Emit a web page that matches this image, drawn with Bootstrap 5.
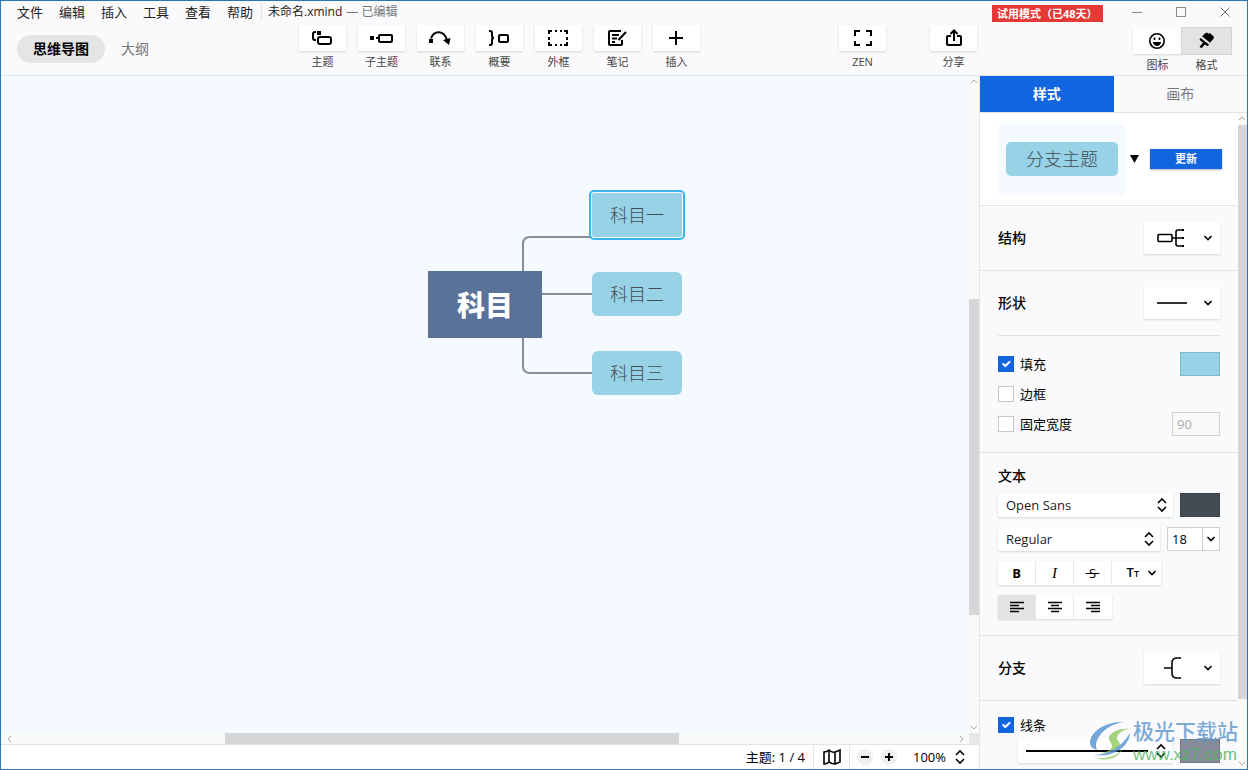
<!DOCTYPE html>
<html lang="zh-CN">
<head>
<meta charset="utf-8">
<meta name="viewport" content="width=device-width, initial-scale=1">
<title>未命名.xmind</title>
<link href="https://cdn.jsdelivr.net/npm/bootstrap@5.3.0/dist/css/bootstrap.min.css" rel="stylesheet">
<style>
:root { --accent: #1166e0; --line: #e2e4e8; --panel: #fafafc; --topic: #97d2e7; }
body { font-family: "Open Sans", "Noto Sans CJK SC", sans-serif; font-size: 13px; line-height: 20px; color: #000; background: var(--panel); }
svg { display: block; flex: none; }
a { color: inherit; text-decoration: none; }
button { padding: 0; border: 0; background: none; color: inherit; }
.window { border: 1px solid #2a76b8; }
.ico { fill: none; stroke: #000; stroke-width: 2; }
.ico.thin { stroke-width: 1.6; }

/* title row and toolbar */
.titlebar { height: 24px; padding: 0 16px 2px; color: #222; }
.menu-links { gap: 16px; }
.menu-links a { display: block; width: 26px; white-space: nowrap; }
.doc-name { margin-left: 8px; padding-left: 6px; border-left: 1px solid var(--line); font-size: 12px; line-height: 16px; }
.doc-state { margin-left: 4px; font-size: 12px; color: #777; }
.trial { width: 111px; height: 17px; padding-left: 5px; margin: 3px 28px 0 0; background: #e53935; color: #fff; font-size: 11px; line-height: 17px; font-weight: 700; white-space: nowrap; }
.win-buttons { gap: 32px; }
.toolbar { height: 51px; border-bottom: 1px solid var(--line); }
.view-switch { width: 298px; padding: 10px 0 0 16px; }
.view-pill { width: 88px; height: 28px; border-radius: 14px; background: #e5e5e6; font-size: 14px; font-weight: 700; }
.view-plain { height: 28px; margin-left: 16px; font-size: 14px; color: #777; }
.tools { gap: 12px; }
.tool { width: 47px; font-size: 11px; line-height: 16px; color: #444; white-space: nowrap; }
.tool-face { width: 47px; height: 26px; margin-bottom: 3px; background: #fff; box-shadow: 0 1px 2px rgba(0,0,0,.15); }
.zen-group { gap: 44px; margin-right: 2px; }
.side-tools { width: 268px; padding: 3px 16px 0 0; }
.side-tools .tool, .side-tools .tool-face { width: 49px; }
.side-tools .active .tool-face { background: #e3e3e4; box-shadow: 0 0 0 1px #d4d4d6; }

/* map area */
.board { background: #f4faff; }
.board svg.links { fill: none; stroke: #878d99; stroke-width: 2; }
.topic { position: absolute; left: 591px; width: 90px; height: 44px; border-radius: 6px; background: var(--topic); color: #434b54; font-size: 18px; font-weight: 300; }
.topic.one { top: 117px; border-radius: 2px; outline: 2px solid #39b5ee; outline-offset: 1px; box-shadow: 0 0 0 1px #f4faff; }
.topic.two { top: 196px; }
.topic.three { top: 275px; }
.topic.root { left: 427px; top: 195px; width: 114px; height: 67px; border-radius: 0; background: #5a7199; color: #fff; font-size: 28px; font-weight: 900; }
.vbar { width: 10px; background: #fafafb; }
.format .vbar { width: 9px; }
.hbar { height: 11px; background: #fafafb; }
.thumb { background: #d6d6d8; }
.bar-arrow { fill: none; stroke: #aaa; stroke-width: 1; }
.corner { width: 10px; background: #e8e8ea; }
.status { height: 25px; background: #fff; border-top: 1px solid var(--line); }
.status > * { height: 24px; }
.status .cell { border-left: 1px solid var(--line); }
.map-cell { width: 36px; }
.zoom-cell { width: 130px; padding-left: 7px; }
.zoom-value { width: 40px; text-align: left; }
.round { width: 16px; height: 16px; border-radius: 8px; background: #f0f0f1; }

/* format panel */
.format { width: 268px; border-left: 1px solid var(--line); background: var(--panel); }
.tab-row { height: 37px; border-bottom: 1px solid var(--line); }
.tab-row button { font-size: 14px; color: #777; }
.tab-row button.active { background: var(--accent); color: #fff; font-weight: 700; }
.block { padding: 0 18px; border-bottom: 1px solid var(--line); }
.block h2 { margin: 0; font-size: 14px; line-height: 20px; font-weight: 500; }
.opt-row { height: 64px; }
.block.opt-row { height: 65px; }
.preview { height: 93px; padding: 0 16px 0 18px; background: #fff; }
.preview-tile { width: 128px; height: 71px; border-radius: 4px; background: #f4faff; }
.preview-topic { width: 112px; height: 34px; border-radius: 5px; background: var(--topic); color: #434b54; font-size: 18px; font-weight: 300; }
.update { width: 72px; height: 20px; background: var(--accent); color: #fff; font-size: 11px; font-weight: 700; box-shadow: 0 1px 2px rgba(0,0,0,.3); }
.picker, .pick, .seg { background: #fff; box-shadow: 0 1px 2px rgba(0,0,0,.15); }
.picker { width: 76px; height: 32px; padding: 0 7px 0 13px; }
.checks { padding: 14px 0; border-top: 1px solid var(--line); gap: 2px; }
.checks > div { height: 28px; }
.tick.form-check-input { width: 16px; height: 16px; margin: 0 6px 0 0; border: 1px solid #c6c8cc; border-radius: 0; background-color: #fff; }
.tick.form-check-input:checked { background-color: var(--accent); border-color: var(--accent); }
.swatch { width: 40px; height: 24px; border: 1px solid rgba(0,0,0,.12); }
.swatch.sky { background: var(--topic); }
.swatch.ink { background: #434b54; }
.swatch.slate { background: #858b98; }
.num { height: 24px; padding: 0 0 0 4px; border: 1px solid #cfd1d5; border-radius: 0; background: #fff; font-size: 13px; }
.num.fixed { width: 48px; color: #aaa; background: var(--panel); }
.num.size { width: 36px; }
.size-drop { width: 17px; height: 24px; border: 1px solid #cfd1d5; border-left: 0; background: #fff; }
.text-block { padding-top: 13px; padding-bottom: 16px; }
.text-rows { gap: 10px; margin-top: 7px; }
.pick { position: relative; height: 24px; }
.pick select { width: 100%; height: 24px; padding: 0 8px; border: 0; appearance: none; background: transparent; font-size: 13px; color: #222; }
.pick svg { position: absolute; right: 6px; top: 4px; pointer-events: none; }
.pick.family { width: 175px; }
.pick.weight { width: 162px; }
.seg { height: 24px; }
.seg button { width: 38px; height: 24px; border-right: 1px solid #e8e8ea; }
.seg button:last-child { border-right: 0; }
.seg button.wide { width: 49px; gap: 8px; }
.seg button.active { background: #e3e3e4; }
.seg .slant { font-family: "Liberation Serif", serif; font-size: 15px; font-style: italic; }
.tiny { font-size: 9px; }
.line-block { padding-top: 14px; }
.stroke-pick { width: 154px; }
.stroke-sample { display: block; width: 122px; height: 2px; margin-left: 8px; background: #000; }

.stamp { position: absolute; right: 9px; bottom: 4px; opacity: .8; gap: 2px; }
.stamp-name { font-size: 21px; line-height: 28px; font-weight: 500; color: #5d96cd; }
.stamp-url { font-family: "Liberation Sans", sans-serif; font-size: 17px; line-height: 20px; color: #4fb560; }
</style>
</head>
<body>
<div class="window vh-100 d-flex flex-column overflow-hidden position-relative">

  <header>
    <div class="titlebar d-flex align-items-center">
      <nav class="menu-links d-flex" aria-label="菜单">
        <a href="#">文件</a><a href="#">编辑</a><a href="#">插入</a><a href="#">工具</a><a href="#">查看</a><a href="#">帮助</a>
      </nav>
      <span class="doc-name">未命名.xmind</span>
      <span class="doc-state">— 已编辑</span>
      <span class="trial ms-auto">试用模式（已48天）</span>
      <div class="win-buttons d-flex">
        <button aria-label="最小化"><svg width="12" height="12" class="bar-arrow"><path d="M1 6.500h10" stroke="#888"/></svg></button>
        <button aria-label="最大化"><svg width="12" height="12" class="bar-arrow"><path d="M1.500 1.500h9v9h-9z" stroke="#888"/></svg></button>
        <button aria-label="关闭"><svg width="12" height="12" class="bar-arrow"><path d="M1.500 1.500l9 9m0-9l-9 9" stroke="#777"/></svg></button>
      </div>
    </div>

    <div class="toolbar d-flex">
      <div class="view-switch d-flex align-items-start">
        <button class="view-pill">思维导图</button>
        <button class="view-plain">大纲</button>
      </div>
      <div class="tools d-flex align-items-start">
        <button class="tool"><span class="tool-face d-flex align-items-center justify-content-center"><svg class="ico" width="24" height="20"><path d="M5 4H4Q2 4 2 6v4q0 2 2 2h1"/><path d="M6 3h4v4H6z" fill="#000" stroke="none"/><rect x="7" y="9" width="13" height="7" rx="2"/></svg></span>主题</button>
        <button class="tool"><span class="tool-face d-flex align-items-center justify-content-center"><svg class="ico" width="24" height="20"><path d="M0 8h4v4H0z" fill="#000" stroke="none"/><path d="M6 10h3"/><rect x="9" y="7" width="13" height="7" rx="1"/></svg></span>子主题</button>
        <button class="tool"><span class="tool-face d-flex align-items-center justify-content-center"><svg class="ico" width="24" height="20"><path d="M0 11h4v4H0z" fill="#000" stroke="none"/><path d="M2 10.500C5 2 15 2 18 12"/><path d="M14 12l7.500-2-1.500 7z" fill="#000" stroke="none"/></svg></span>联系</button>
        <button class="tool"><span class="tool-face d-flex align-items-center justify-content-center"><svg class="ico" width="24" height="20"><path d="M1 3h1q2 0 2 2v3q0 2 2 2q-2 0-2 2v3q0 2-2 2H1"/><rect x="11" y="7" width="9" height="7" rx="1"/></svg></span>概要</button>
        <button class="tool"><span class="tool-face d-flex align-items-center justify-content-center"><svg class="ico" width="24" height="20"><path d="M2 6V3h3M8 3h2M13 3h2M17 3h3v3M20 9v3M20 14v3h-3M15 17h-2M10 17H8M5 17H2v-3M2 12V9"/></svg></span>外框</button>
        <button class="tool"><span class="tool-face d-flex align-items-center justify-content-center"><svg class="ico" width="24" height="20"><path d="M15 3H4q-1 0-1 1v12q0 1 1 1h11q1 0 1-1v-4M6 7h7M6 10.500h5M6 14h3M20 4l-7.500 8"/></svg></span>笔记</button>
        <button class="tool"><span class="tool-face d-flex align-items-center justify-content-center"><svg class="ico" width="24" height="20"><path d="M4 10h14M11 3v14"/></svg></span>插入</button>
      </div>
      <div class="zen-group d-flex align-items-start ms-auto">
        <button class="tool"><span class="tool-face d-flex align-items-center justify-content-center"><svg class="ico" width="24" height="20"><path d="M4 8V3h5M15 3h5v5M20 13v4h-5M9 17H4v-4"/></svg></span>ZEN</button>
        <button class="tool"><span class="tool-face d-flex align-items-center justify-content-center"><svg class="ico" width="24" height="20"><path d="M9 8H6q-1 0-1 1v7q0 1 1 1h12q1 0 1-1V9q0-1-1-1h-3M12 13V3M8.500 6L12 2.500 15.500 6"/></svg></span>分享</button>
      </div>
      <div class="side-tools d-flex align-items-start justify-content-end">
        <button class="tool"><span class="tool-face d-flex align-items-center justify-content-center"><svg class="ico thin" width="20" height="20"><circle cx="9" cy="10" r="7.200"/><path d="M6.500 6.500v2.500M11.500 6.500v2.500"/><path d="M4.800 11h8.400q-1 4-4.200 4t-4.200-4z" fill="#000" stroke="none"/></svg></span>图标</button>
        <button class="tool active"><span class="tool-face d-flex align-items-center justify-content-center"><svg width="20" height="20"><path d="M8 2.500l2-1 1.500 1.500 1-1.200 4.500 4-.5 2-3.500 4-8-6.500zM3.500 7l8.500 6.500-1.200 1.800-3-1.800-3.300 3.800-2-1.500 3.500-4-3.500-3z"/></svg></span>格式</button>
      </div>
    </div>
  </header>

  <div class="d-flex flex-grow-1 overflow-hidden">
    <main class="d-flex flex-column flex-grow-1 overflow-hidden">
      <div class="d-flex flex-grow-1 overflow-hidden">
        <div class="board position-relative flex-grow-1 overflow-hidden">
          <svg class="links position-absolute top-0 start-0" width="100%" height="100%"><path d="M522 195v-27q0-7 7-7h62M541 218h50M522 262v28q0 7 7 7h62"/></svg>
          <div class="topic root d-flex align-items-center justify-content-center">科目</div>
          <div class="topic one d-flex align-items-center justify-content-center">科目一</div>
          <div class="topic two d-flex align-items-center justify-content-center">科目二</div>
          <div class="topic three d-flex align-items-center justify-content-center">科目三</div>
        </div>
        <div class="vbar d-flex flex-column align-items-center">
          <svg class="bar-arrow" width="10" height="10"><path d="M2 7l3-3 3 3"/></svg>
          <div style="flex:213"></div><div class="thumb w-100" style="flex:317"></div><div style="flex:108"></div>
          <svg class="bar-arrow" width="10" height="10"><path d="M2 3l3 3 3-3"/></svg>
        </div>
      </div>
      <div class="d-flex">
        <div class="hbar d-flex align-items-center flex-grow-1">
          <svg class="bar-arrow ms-1" width="10" height="10"><path d="M6 2L3 5l3 3"/></svg>
          <div style="flex:210"></div><div class="thumb h-100" style="flex:454"></div><div style="flex:276"></div>
          <svg class="bar-arrow" width="14" height="10"><path d="M5 2l3 3-3 3"/></svg>
        </div>
        <div class="corner"></div>
      </div>
      <footer class="status d-flex align-items-center justify-content-end">
        <span class="d-flex align-items-center pe-2">主题: 1 / 4</span>
        <button class="cell map-cell d-flex align-items-center justify-content-center" aria-label="导航图"><svg class="ico thin" width="18" height="16"><path d="M1 3q3 0 5-2 3 3 6 2 3-1 5-2v12q-2 1-5 2-3 0-6-2-2 2-5 2zM6 1v12M12 3v12"/></svg></button>
        <div class="cell zoom-cell d-flex align-items-center">
          <button class="round d-flex align-items-center justify-content-center" aria-label="缩小"><svg class="ico" width="10" height="10"><path d="M1 5h8"/></svg></button>
          <button class="round d-flex align-items-center justify-content-center ms-2" aria-label="放大"><svg class="ico" width="10" height="10"><path d="M1 5h8M5 1v8"/></svg></button>
          <button class="d-flex align-items-center ms-3"><span class="zoom-value">100%</span><svg class="ico thin" width="14" height="16"><path d="M3 6l4-4 4 4M3 10l4 4 4-4"/></svg></button>
        </div>
      </footer>
    </main>

    <aside class="format d-flex flex-column flex-shrink-0">
      <div class="tab-row d-flex">
        <button class="active flex-fill w-50">样式</button>
        <button class="flex-fill w-50">画布</button>
      </div>
      <div class="d-flex flex-grow-1 overflow-hidden">
        <div class="flex-grow-1 overflow-hidden">
          <section class="block preview d-flex align-items-center">
            <div class="preview-tile d-flex align-items-center justify-content-center"><div class="preview-topic d-flex align-items-center justify-content-center">分支主题</div></div>
            <button class="ms-1" aria-label="选择样式"><svg width="9" height="8"><path d="M0 0h9L4.500 8z"/></svg></button>
            <button class="update ms-auto">更新</button>
          </section>

          <section class="block opt-row d-flex align-items-center justify-content-between">
            <h2>结构</h2>
            <button class="picker d-flex align-items-center justify-content-between" aria-label="结构"><svg class="ico thin" width="28" height="20"><rect x="1" y="6.500" width="14" height="7" rx="1"/><path d="M15 10h12M26 2h-5q-2 0-2 2v12q0 2 2 2h5"/><path d="M25 1h2v2h-2zM25 17h2v2h-2zM25 9h2v2h-2z" fill="#000" stroke="none"/></svg><svg class="ico thin" width="10" height="8"><path d="M1.500 2L5 5.500 8.500 2"/></svg></button>
          </section>

          <section class="block">
            <div class="opt-row d-flex align-items-center justify-content-between">
              <h2>形状</h2>
              <button class="picker d-flex align-items-center justify-content-between" aria-label="形状"><svg class="ico thin" width="30" height="4"><path d="M0 2h30"/></svg><svg class="ico thin" width="10" height="8"><path d="M1.500 2L5 5.500 8.500 2"/></svg></button>
            </div>
            <div class="checks d-flex flex-column">
              <div class="d-flex align-items-center"><input class="tick form-check-input" type="checkbox" id="fill" checked><label for="fill">填充</label><button class="swatch sky ms-auto" aria-label="填充颜色"></button></div>
              <div class="d-flex align-items-center"><input class="tick form-check-input" type="checkbox" id="edge"><label for="edge">边框</label></div>
              <div class="d-flex align-items-center"><input class="tick form-check-input" type="checkbox" id="fixed"><label for="fixed">固定宽度</label><input class="num fixed ms-auto" type="text" value="90" aria-label="宽度" disabled></div>
            </div>
          </section>

          <section class="block text-block">
            <h2>文本</h2>
            <div class="text-rows d-flex flex-column align-items-start">
              <div class="d-flex w-100 justify-content-between">
                <div class="pick family"><select aria-label="字体"><option>Open Sans</option></select><svg class="ico thin" width="10" height="16"><path d="M1 6l4-4 4 4M1 10l4 4 4-4"/></svg></div>
                <button class="swatch ink" aria-label="文本颜色"></button>
              </div>
              <div class="d-flex w-100 justify-content-between">
                <div class="pick weight"><select aria-label="字重"><option>Regular</option></select><svg class="ico thin" width="10" height="16"><path d="M1 6l4-4 4 4M1 10l4 4 4-4"/></svg></div>
                <div class="d-flex"><input class="num size" type="text" value="18" aria-label="字号"><button class="size-drop d-flex align-items-center justify-content-center" aria-label="选择字号"><svg class="ico thin" width="10" height="8"><path d="M1.500 2L5 5.500 8.500 2"/></svg></button></div>
              </div>
              <div class="seg d-flex">
                <button class="fw-bold">B</button>
                <button class="slant">I</button>
                <button class="text-decoration-line-through">&nbsp;S&nbsp;</button>
                <button class="wide d-flex align-items-center justify-content-end pe-1"><span class="fw-semibold">T<span class="tiny">T</span></span><svg class="ico thin" width="10" height="8"><path d="M1.500 2L5 5.500 8.500 2"/></svg></button>
              </div>
              <div class="seg d-flex">
                <button class="active d-flex align-items-center justify-content-center" aria-label="左对齐"><svg class="ico thin" width="14" height="12"><path d="M0 1.500h14M0 4.500h9M0 7.500h14M0 10.500h9"/></svg></button>
                <button class="d-flex align-items-center justify-content-center" aria-label="居中"><svg class="ico thin" width="14" height="12"><path d="M0 1.500h14M3 4.500h8M0 7.500h14M3 10.500h8"/></svg></button>
                <button class="d-flex align-items-center justify-content-center" aria-label="右对齐"><svg class="ico thin" width="14" height="12"><path d="M0 1.500h14M5 4.500h9M0 7.500h14M5 10.500h9"/></svg></button>
              </div>
            </div>
          </section>

          <section class="block opt-row d-flex align-items-center justify-content-between">
            <h2>分支</h2>
            <button class="picker d-flex align-items-center justify-content-between" aria-label="分支"><svg class="ico thin" width="28" height="24"><path d="M7 12h8M24 2h-4q-5 0-5 5v10q0 5 5 5h4"/></svg><svg class="ico thin" width="10" height="8"><path d="M1.500 2L5 5.500 8.500 2"/></svg></button>
          </section>

          <section class="block border-0 line-block">
            <div class="d-flex align-items-center"><input class="tick form-check-input" type="checkbox" id="line" checked><label for="line">线条</label></div>
            <div class="d-flex justify-content-end gap-2 pt-1">
              <button class="pick stroke-pick" aria-label="线条样式"><span class="stroke-sample"></span><svg class="ico thin" width="10" height="16"><path d="M1 6l4-4 4 4M1 10l4 4 4-4"/></svg></button>
              <button class="swatch slate" aria-label="线条颜色"></button>
            </div>
          </section>
        </div>
        <div class="vbar d-flex flex-column align-items-center">
          <svg class="bar-arrow" width="9" height="12"><path d="M1 7l3-3 3 3"/></svg>
          <div class="thumb w-100" style="flex:574"></div><div style="flex:60"></div>
          <svg class="bar-arrow" width="9" height="10"><path d="M1 3l3 3 3-3"/></svg>
        </div>
      </div>
    </aside>
  </div>

  <div class="stamp d-flex align-items-center pe-none">
    <svg width="42" height="40" viewBox="0 0 42 40"><path d="M34 1C18 0 2 10 1 21c0 5 3 7 7 8-2-5-1-10 4-16C17 7 24 3 34 1z" fill="#4f93d2"/><path d="M40 8c-8-1-17 2-20 8-1 3 2 5 3 8 1 4-4 7-11 8 9 2 18-2 19-8 0-4-4-5-3-8 1-4 6-7 12-8z" fill="#8fc85c"/><path d="M41 12c-1 13-15 25-37 22 14 0 28-7 37-22z" fill="#4f93d2"/><path d="M7 37c9 1 20-1 27-9-5 9-16 13-27 9z" fill="#8fc85c"/></svg>
    <div><div class="stamp-name">极光下载站</div><div class="stamp-url">www.xz7.com</div></div>
  </div>
</div>
<script src="https://cdn.jsdelivr.net/npm/bootstrap@5.3.0/dist/js/bootstrap.bundle.min.js"></script>
</body>
</html>
